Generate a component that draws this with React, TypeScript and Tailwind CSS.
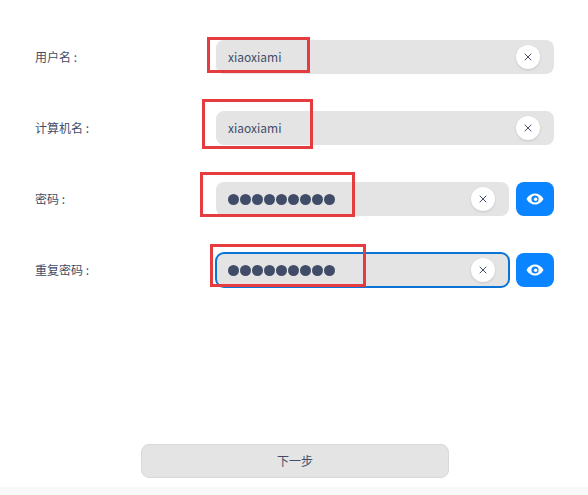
import { X } from 'lucide-react';

const fields = [
  { label: '用户名 :', value: 'xiaoxiami', secret: false, focused: false },
  { label: '计算机名 :', value: 'xiaoxiami', secret: false, focused: false },
  { label: '密码 :', value: '', secret: true, focused: false },
  { label: '重复密码 :', value: '', secret: true, focused: true },
];

const marks = [
  'left-[207px] top-[37px] w-[103px] h-[36px]',
  'left-[202px] top-[99px] w-[111px] h-[50px]',
  'left-[200px] top-[172px] w-[155px] h-[45px]',
  'left-[210px] top-[244px] w-[156px] h-[43px]',
];

function EyeIcon() {
  return (
    <svg width="18" height="12" viewBox="0 0 18 12">
      <path d="M0.5 6C2.5 2.4 5.5 0.5 9 0.5S15.5 2.4 17.5 6C15.5 9.6 12.5 11.5 9 11.5S2.5 9.6 0.5 6Z" fill="#fff" />
      <circle cx="9" cy="6" r="3.6" fill="#0a84ff" />
      <circle cx="9.6" cy="6.2" r="1.7" fill="#fff" />
    </svg>
  );
}

function Field({ label, value, secret, focused }: (typeof fields)[number]) {
  return (
    <div className="flex items-center h-[34px]">
      <div className="w-[181px] text-[12px] text-[#414d68]">{label}</div>
      <div className="flex-1 flex items-center gap-[7px]">
        <div
          className={`flex-1 h-[34px] rounded-lg bg-[#e4e4e4] flex items-center justify-between pl-3 pr-[14px] ${
            focused ? 'outline-2 -outline-offset-1 outline-[#0a74d6]' : ''
          }`}
        >
          {secret ? (
            <div className="flex -ml-[1px]">
              {Array.from({ length: 9 }).map((_, i) => (
                <span key={i} className="w-[12px] h-[11px] flex justify-center">
                  <span className="block w-[11px] h-[11px] rounded-full bg-[#414d68]" />
                </span>
              ))}
            </div>
          ) : (
            <span className="text-[12px] text-[#414d68]">{value}</span>
          )}
          <span className="w-6 h-6 rounded-full bg-white flex items-center justify-center shadow-sm">
            <X className="w-3 h-3 text-[#414d68]" strokeWidth={2} />
          </span>
        </div>
        {secret && (
          <button className="w-[38px] h-[34px] rounded-lg bg-[#0a84ff] flex items-center justify-center">
            <EyeIcon />
          </button>
        )}
      </div>
    </div>
  );
}

export default function App() {
  return (
    <div className="relative w-[588px] h-[495px] bg-white flex flex-col font-['Noto_Sans_CJK_SC',sans-serif] overflow-hidden">
      <div className="flex-1 flex flex-col">
        <div className="pt-10 pl-[35px] pr-[34px] flex flex-col gap-[37px]">
          {fields.map((f) => (
            <Field key={f.label} {...f} />
          ))}
        </div>
        <div className="mt-auto flex justify-center pb-[9px] pl-[2px]">
          <button className="w-[308px] h-[34px] rounded-lg bg-[#e4e4e4] border border-[#d9d9d9] text-[12px] text-[#414d68]">
            下一步
          </button>
        </div>
      </div>
      <div className="h-2 bg-[#f8f8f8]" />
      {marks.map((m) => (
        <div key={m} className={`absolute border-[3px] border-[#e53c3f] ${m}`} />
      ))}
    </div>
  );
}
